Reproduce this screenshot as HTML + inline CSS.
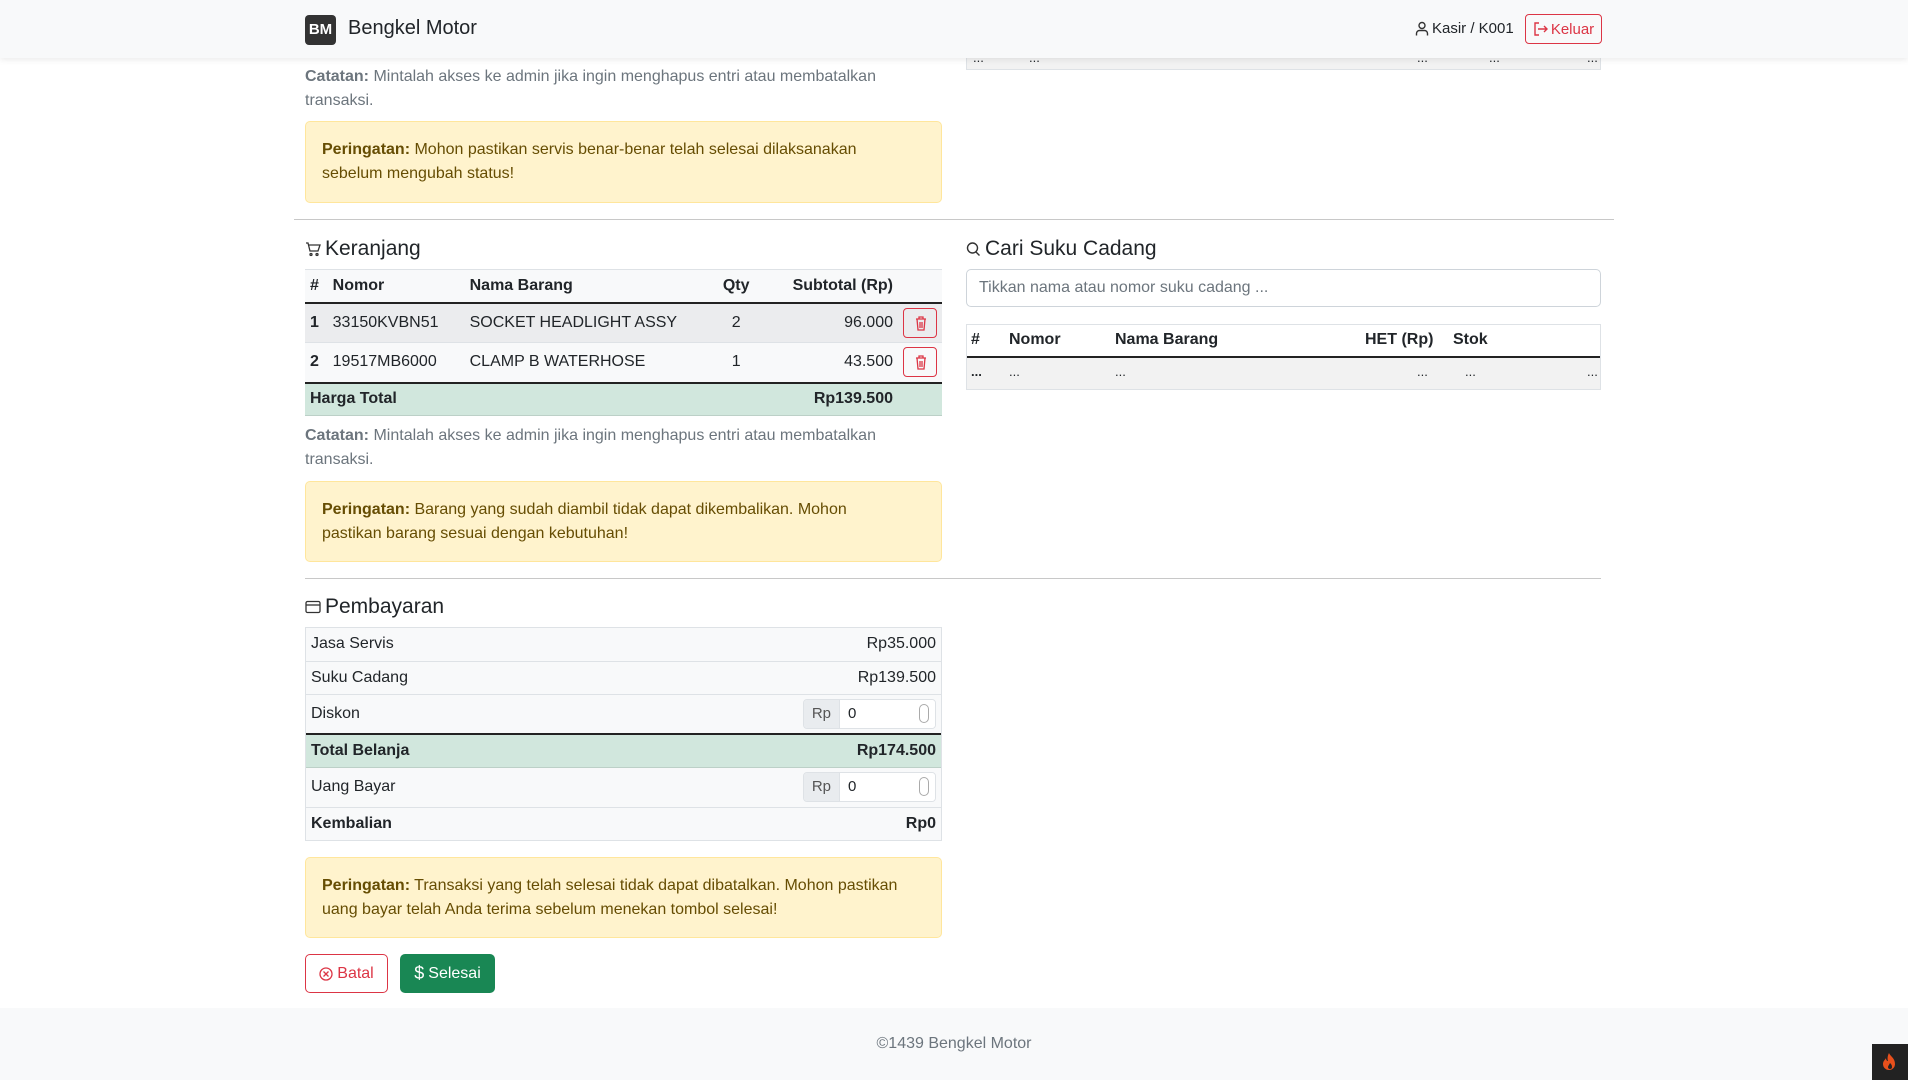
<!DOCTYPE html>
<html><head><meta charset="utf-8">
<style>
*{box-sizing:border-box;margin:0;padding:0}
body{width:1908px;height:1080px;overflow:hidden;background:#fff;font-family:"Liberation Sans",sans-serif;font-size:16px;color:#212529;position:relative}
.a{position:absolute}
.nav{left:0;top:0;width:1908px;height:58px;background:#f8f9fa;box-shadow:0 2px 6px rgba(0,0,0,.08);z-index:5}
.note{color:#6c757d;line-height:24px;font-size:16px;white-space:nowrap}
.note b{color:#6c757d}
.warn{background:#fff3cd;border:1px solid #ffe69c;border-radius:5px;color:#664d03;padding:0 16px;display:flex;align-items:center;line-height:24px;font-size:16px;white-space:nowrap}
.h{font-size:21px;display:flex;align-items:center;gap:4px}
table{border-collapse:collapse;width:100%}
td,th{padding:0 5px;text-align:left;white-space:nowrap}
.r{text-align:right}
.trash{display:inline-block;width:34px;height:30px;border:1px solid #dc3545;border-radius:4px;vertical-align:middle;position:relative}
.inp{display:inline-flex;height:30px;border:1px solid #dee2e6;border-radius:4px;overflow:hidden;vertical-align:middle;font-size:15px}
.inp span{background:#e9ecef;padding:0 8px;line-height:28px;border-right:1px solid #dee2e6;color:#555}
.inp i{display:block;width:95px;background:#fff;font-style:normal;line-height:28px;padding-left:8px;position:relative;text-align:left}
</style></head><body>
<div class="a nav">
 <div class="a" style="left:305px;top:15px;width:31px;height:30px;background:#333;border-radius:4px;color:#fff;font-weight:bold;font-size:15px;text-align:center;line-height:30px">BM</div>
 <div class="a" style="left:348px;top:17px;font-size:20px">Bengkel Motor</div>
 <div class="a" style="left:1415px;top:20px;font-size:15px;display:flex;align-items:center;gap:3px"><svg width="14" height="15" viewBox="0 0 14 15" fill="none" stroke="#333" stroke-width="1.4"><circle cx="7" cy="4.5" r="3"/><path d="M1.5 14.5v-2a3 3 0 0 1 3-3h5a3 3 0 0 1 3 3v2"/></svg>Kasir / K001</div>
 <div class="a" style="left:1525px;top:14px;width:77px;height:30px;border:1px solid #dc3545;border-radius:4px;color:#dc3545;font-size:15px;display:flex;align-items:center;justify-content:center;gap:3px"><svg width="15" height="14" viewBox="0 0 15 14" fill="none" stroke="#dc3545" stroke-width="1.4"><path d="M6 1H2v12h4M5 7h9M11 4l3 3-3 3"/></svg>Keluar</div>
</div>
<div class="a" style="left:966px;top:40px;width:635px;height:30px;background:#f2f2f2;border:1px solid #dee2e6;border-top:none;font-size:13px">
 <span class="a" style="left:6px;top:10px">...</span><span class="a" style="left:62px;top:10px">...</span><span class="a" style="left:450px;top:10px">...</span><span class="a" style="left:522px;top:10px">...</span><span class="a" style="left:620px;top:10px">...</span>
</div>
<div class="a note" style="left:305px;top:65px"><b>Catatan:</b> Mintalah akses ke admin jika ingin menghapus entri atau membatalkan<br>transaksi.</div>
<div class="a warn" style="left:305px;top:121px;width:637px;height:82px"><div><b>Peringatan:</b> Mohon pastikan servis benar-benar telah selesai dilaksanakan<br>sebelum mengubah status!</div></div>
<div class="a" style="left:294px;top:219px;width:1320px;height:1px;background:#c8c8c8"></div>

<div class="a h" style="left:305px;top:237px"><svg width="16" height="16" viewBox="0 0 16 16" fill="none" stroke="#333" stroke-width="1.3"><path d="M1 2h2l2 8h8l2-6H4"/><circle cx="6" cy="13.5" r="1"/><circle cx="12" cy="13.5" r="1"/></svg>Keranjang</div>
<div class="a" style="left:305px;top:269px;width:637px">
<table style="font-size:16px">
<tr style="height:33px;background:#f8f9fa;border-top:1px solid #dee2e6;border-bottom:2px solid #222;font-weight:bold"><th style="width:23px">#</th><th style="width:139px">Nomor</th><th style="width:245px">Nama Barang</th><th style="width:60px;text-align:center">Qty</th><th class="r" style="width:135px">Subtotal (Rp)</th><th></th></tr>
<tr style="height:40px;background:#ebecee;border-bottom:1px solid #dee2e6"><td><b>1</b></td><td>33150KVBN51</td><td>SOCKET HEADLIGHT ASSY</td><td style="text-align:center">2</td><td class="r">96.000</td><td><span class="trash"><svg class="a" style="left:11px;top:7px" width="12" height="15" viewBox="0 0 12 15" fill="none" stroke="#dc3545" stroke-width="1.3"><path d="M1 3h10M4 3V1h4v2M2 3l1 11h6l1-11M5 6v6M7 6v6"/></svg></span></td></tr>
<tr style="height:40px;background:#f8f9fa;border-bottom:2px solid #222"><td><b>2</b></td><td>19517MB6000</td><td>CLAMP B WATERHOSE</td><td style="text-align:center">1</td><td class="r">43.500</td><td><span class="trash"><svg class="a" style="left:11px;top:7px" width="12" height="15" viewBox="0 0 12 15" fill="none" stroke="#dc3545" stroke-width="1.3"><path d="M1 3h10M4 3V1h4v2M2 3l1 11h6l1-11M5 6v6M7 6v6"/></svg></span></td></tr>
<tr style="height:33px;background:#d1e7dd;border-bottom:1px solid #bcd0c7;font-weight:bold"><td colspan="4">Harga Total</td><td class="r">Rp139.500</td><td></td></tr>
</table></div>
<div class="a note" style="left:305px;top:424px"><b>Catatan:</b> Mintalah akses ke admin jika ingin menghapus entri atau membatalkan<br>transaksi.</div>
<div class="a warn" style="left:305px;top:481px;width:637px;height:81px"><div><b>Peringatan:</b> Barang yang sudah diambil tidak dapat dikembalikan. Mohon<br>pastikan barang sesuai dengan kebutuhan!</div></div>

<div class="a h" style="left:966px;top:237px"><svg width="15" height="16" viewBox="0 0 15 16" fill="none" stroke="#333" stroke-width="1.4"><circle cx="6.5" cy="7" r="5"/><path d="M10 11l3.5 3.5"/></svg>Cari Suku Cadang</div>
<div class="a" style="left:966px;top:269px;width:635px;height:38px;border:1px solid #ced4da;border-radius:5px;color:#6c757d;font-size:16px;line-height:36px;padding-left:12px">Tikkan nama atau nomor suku cadang ...</div>
<div class="a" style="left:966px;top:324px;width:635px;height:66px;border:1px solid #dee2e6">
 <div style="height:33px;border-bottom:2px solid #222;font-weight:bold;position:relative"><span class="a" style="left:4px;top:6px">#</span><span class="a" style="left:42px;top:6px">Nomor</span><span class="a" style="left:148px;top:6px">Nama Barang</span><span class="a" style="left:398px;top:6px">HET (Rp)</span><span class="a" style="left:486px;top:6px">Stok</span></div>
 <div style="height:31px;background:#f2f2f2;position:relative;font-size:13px"><b class="a" style="left:4px;top:6px">...</b><span class="a" style="left:42px;top:6px">...</span><span class="a" style="left:148px;top:6px">...</span><span class="a" style="left:450px;top:6px">...</span><span class="a" style="left:498px;top:6px">...</span><span class="a" style="left:620px;top:6px">...</span></div>
</div>

<div class="a" style="left:305px;top:578px;width:1296px;height:1px;background:#c8c8c8"></div>
<div class="a h" style="left:305px;top:595px"><svg width="16" height="14" viewBox="0 0 16 14" fill="none" stroke="#333" stroke-width="1.3"><rect x="1" y="1.5" width="14" height="11" rx="1.5"/><path d="M1 5h14"/></svg>Pembayaran</div>
<div class="a" style="left:305px;top:627px;width:637px;border:1px solid #dee2e6;background:#f8f9fa">
<table style="font-size:16px">
<tr style="height:33px;border-bottom:1px solid #dee2e6"><td>Jasa Servis</td><td class="r">Rp35.000</td></tr>
<tr style="height:33px;border-bottom:1px solid #dee2e6"><td>Suku Cadang</td><td class="r">Rp139.500</td></tr>
<tr style="height:40px;border-bottom:2px solid #222"><td>Diskon</td><td class="r"><span class="inp"><span>Rp</span><i>0<b class="a" style="right:6px;top:4px;width:10px;height:19px;border:1px solid #aaa;border-radius:5px"></b></i></span></td></tr>
<tr style="height:33px;background:#d1e7dd;border-bottom:1px solid #bcd0c7;font-weight:bold"><td>Total Belanja</td><td class="r">Rp174.500</td></tr>
<tr style="height:40px;border-bottom:1px solid #dee2e6"><td>Uang Bayar</td><td class="r"><span class="inp"><span>Rp</span><i>0<b class="a" style="right:6px;top:4px;width:10px;height:19px;border:1px solid #aaa;border-radius:5px"></b></i></span></td></tr>
<tr style="height:33px;font-weight:bold"><td>Kembalian</td><td class="r">Rp0</td></tr>
</table></div>
<div class="a warn" style="left:305px;top:857px;width:637px;height:81px"><div><b>Peringatan:</b> Transaksi yang telah selesai tidak dapat dibatalkan. Mohon pastikan<br>uang bayar telah Anda terima sebelum menekan tombol selesai!</div></div>
<div class="a" style="left:305px;top:954px;width:83px;height:39px;border:1px solid #dc3545;border-radius:5px;color:#dc3545;display:flex;align-items:center;justify-content:center;gap:4px"><svg width="14" height="14" viewBox="0 0 14 14" fill="none" stroke="#dc3545" stroke-width="1.3"><circle cx="7" cy="7" r="6"/><path d="M4.5 4.5l5 5M9.5 4.5l-5 5"/></svg>Batal</div>
<div class="a" style="left:400px;top:954px;width:95px;height:39px;background:#198754;border-radius:5px;color:#fff;display:flex;align-items:center;justify-content:center;gap:4px"><span style="font-size:18px">$</span>Selesai</div>

<div class="a" style="left:0;top:1008px;width:1908px;height:72px;background:#f8f9fa;color:#6c757d;text-align:center;line-height:72px;font-size:16px">©1439 Bengkel Motor</div>
<div class="a" style="left:1872px;top:1044px;width:36px;height:36px;background:#222"><svg class="a" style="left:9px;top:8px" width="18" height="20" viewBox="0 0 18 20"><path d="M8 1c1 3 6 5 6 11a6 6 0 0 1-12 0c0-3 2-4 3-6 0 2 1 3 2 3-1-3 0-6 1-8z" fill="#e8501c"/><path d="M9 11c1 1 2 2 2 4a2 2 0 0 1-4 0c0-1 1-2 2-4z" fill="#222"/></svg></div>
</body></html>
